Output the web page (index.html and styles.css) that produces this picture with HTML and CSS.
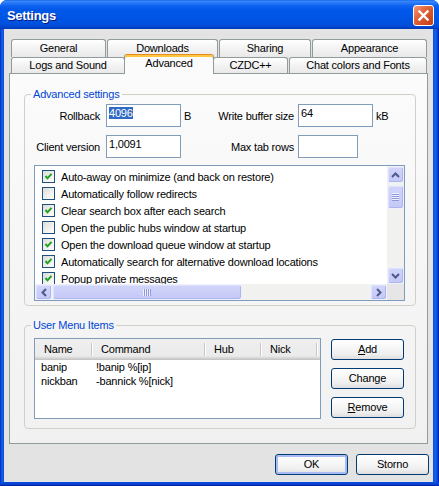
FILE: index.html
```html
<!DOCTYPE html>
<html>
<head>
<meta charset="utf-8">
<title>Settings</title>
<link rel="stylesheet" href="styles.css">
</head>
<body>
<div class="window">
  <div class="titlebar">
    <span class="title">Settings</span>
    <span class="close"><svg width="19" height="19" viewBox="0 0 19 19"><path d="M5.5 5.5 L13.5 13.5 M13.5 5.5 L5.5 13.5" stroke="#fff" stroke-width="2.4" stroke-linecap="square"/></svg></span>
  </div>
  <div class="client">
    <div class="tabs">
      <div class="tabrow back">
        <div class="tab t-general">General</div>
        <div class="tab t-downloads">Downloads</div>
        <div class="tab t-sharing">Sharing</div>
        <div class="tab t-appearance">Appearance</div>
      </div>
      <div class="tabrow front">
        <div class="tab t-logs">Logs and Sound</div>
        <div class="tab t-advanced sel-tab">Advanced</div>
        <div class="tab t-czdc">CZDC++</div>
        <div class="tab t-chat">Chat colors and Fonts</div>
      </div>
    </div>
    <div class="panel">
      <fieldset class="group adv">
        <legend>Advanced settings</legend>
        <div class="frow">
          <span class="lbl l1">Rollback</span>
          <span class="edit w75"><span class="hl">4096</span></span>
          <span class="unit">B</span>
          <span class="lbl l2">Write buffer size</span>
          <span class="edit w75">64</span>
          <span class="unit">kB</span>
        </div>
        <div class="frow">
          <span class="lbl l1">Client version</span>
          <span class="edit w75">1,0091</span>
          <span class="unit"></span>
          <span class="lbl l2">Max tab rows</span>
          <span class="edit w60"></span>
        </div>
        <div class="listbox">
          <div class="lb-items">
            <div class="item"><span class="cb"><svg width="11" height="11" viewBox="0 0 11 11"><path d="M2.5 5 L4.5 7.3 L8.5 2.8" fill="none" stroke="#21a121" stroke-width="2"/></svg></span><span>Auto-away on minimize (and back on restore)</span></div>
            <div class="item"><span class="cb"></span><span>Automatically follow redirects</span></div>
            <div class="item"><span class="cb"><svg width="11" height="11" viewBox="0 0 11 11"><path d="M2.5 5 L4.5 7.3 L8.5 2.8" fill="none" stroke="#21a121" stroke-width="2"/></svg></span><span>Clear search box after each search</span></div>
            <div class="item"><span class="cb"></span><span>Open the public hubs window at startup</span></div>
            <div class="item"><span class="cb"><svg width="11" height="11" viewBox="0 0 11 11"><path d="M2.5 5 L4.5 7.3 L8.5 2.8" fill="none" stroke="#21a121" stroke-width="2"/></svg></span><span>Open the download queue window at startup</span></div>
            <div class="item"><span class="cb"><svg width="11" height="11" viewBox="0 0 11 11"><path d="M2.5 5 L4.5 7.3 L8.5 2.8" fill="none" stroke="#21a121" stroke-width="2"/></svg></span><span>Automatically search for alternative download locations</span></div>
            <div class="item"><span class="cb"><svg width="11" height="11" viewBox="0 0 11 11"><path d="M2.5 5 L4.5 7.3 L8.5 2.8" fill="none" stroke="#21a121" stroke-width="2"/></svg></span><span>Popup private messages</span></div>
          </div>
          <div class="vbar">
            <span class="sb"><svg width="9" height="6" viewBox="0 0 9 6"><path d="M1 5 L4.5 1.5 L8 5" fill="none" stroke="#4d5a8e" stroke-width="2"/></svg></span>
            <span class="vthumb"><span class="grip-h"></span></span>
            <span class="sb down"><svg width="9" height="6" viewBox="0 0 9 6"><path d="M1 1 L4.5 4.5 L8 1" fill="none" stroke="#4d5a8e" stroke-width="2"/></svg></span>
          </div>
          <div class="hbar">
            <span class="sb"><svg width="6" height="9" viewBox="0 0 6 9"><path d="M5 1 L1.5 4.5 L5 8" fill="none" stroke="#4d5a8e" stroke-width="2"/></svg></span>
            <span class="hthumb"><span class="grip-v"></span></span>
            <span class="sb right"><svg width="6" height="9" viewBox="0 0 6 9"><path d="M1 1 L4.5 4.5 L1 8" fill="none" stroke="#4d5a8e" stroke-width="2"/></svg></span>
          </div>
          <div class="corner"></div>
        </div>
      </fieldset>
      <fieldset class="group umi">
        <legend>User Menu Items</legend>
        <div class="umi-body">
          <div class="lv">
            <div class="lv-head">
              <span class="hc c1">Name</span>
              <span class="hc c2">Command</span>
              <span class="hc c3">Hub</span>
              <span class="hc c4">Nick</span>
            </div>
            <div class="lv-row"><span class="rc c1">banip</span><span class="rc c2">!banip %[ip]</span></div>
            <div class="lv-row"><span class="rc c1">nickban</span><span class="rc c2">-bannick %[nick]</span></div>
          </div>
          <div class="btncol">
            <button class="btn"><u>A</u>dd</button>
            <button class="btn">Chan<u>g</u>e</button>
            <button class="btn"><u>R</u>emove</button>
          </div>
        </div>
      </fieldset>
    </div>
    <div class="footer">
      <button class="btn def">OK</button>
      <button class="btn">Storno</button>
    </div>
  </div>
</div>
</body>
</html>
```

FILE: styles.css
```css
* { box-sizing: border-box; }
html, body { margin: 0; padding: 0; }
body {
  width: 439px; height: 486px; overflow: hidden; background: #fff;
  font-family: "Liberation Sans", Arial, sans-serif; font-size: 11px;
  letter-spacing: -0.2px; color: #000;
}
.window {
  width: 439px; height: 486px; display: flex; flex-direction: column;
  border-radius: 7px 7px 0 0; overflow: hidden;
  background:
    linear-gradient(to top, #00138c 0, #0838c8 1px, #0a4ad8 3px, rgba(10,74,216,0) 4px),
    linear-gradient(to right, #0019a8 0, #0a4fdc 1px, #1463ec 2px, #0a4ad8 4px, #0a4ad8 433px, #1463ec 435px, #0a4fdc 437px, #0019a8 439px);
}
.titlebar {
  height: 29px; flex: none; display: flex; justify-content: space-between; align-items: flex-start;
  padding: 0 5px 0 7px;
  background: linear-gradient(#0a5ee8 0, #3a8bf9 1px, #2878f7 3px, #0c62ef 6px, #0058ea 10px, #0055e5 18px, #0050dd 24px, #0046cf 27px, #0037b0 29px);
}
.title {
  margin-top: 8px; color: #fff; font-weight: bold; font-size: 13px; line-height: 16px;
  letter-spacing: -0.3px; text-shadow: 1px 1px 0 #0a1a80;
}
.close {
  margin-top: 5px; width: 21px; height: 21px; border: 1px solid #fff; border-radius: 3px;
  background: linear-gradient(135deg, #f39a80 0, #e2693f 35%, #d14e24 70%, #c43e17 100%);
  display: flex; align-items: center; justify-content: center;
}
.close svg { display: block; }
.client {
  flex: 1; min-height: 0; margin: 0 6px 4px 4px; background: #e3e3e3;
  display: flex; flex-direction: column;
}
.tabs { flex: none; margin: 10px 0 0 7px; }
.tabrow { display: flex; }
.tabrow.back { height: 18px; }
.tabrow.front { height: 16px; position: relative; z-index: 1; }
.tab {
  flex: none; height: 100%; border: 1px solid #919b9c; border-bottom: 0; border-radius: 3px 3px 0 0;
  background: linear-gradient(#ffffff, #f3f3f3 50%, #e9e9e9);
  text-align: center; line-height: 16px; white-space: nowrap;
}
.front .tab { line-height: 15px; }
.tab.sel-tab {
  height: 20px; margin-top: -3px; background: #fbfbfb;
  border-top: 1px solid #e68b2c; box-shadow: inset 0 2px 0 #ffc73c;
  padding-top: 1px; position: relative; z-index: 2;
}
.t-general { width: 95px; }
.t-downloads { width: 111px; margin-left: 1px; }
.t-sharing { width: 92px; margin-left: 1px; }
.t-appearance { width: 115px; margin-left: 1px; }
.t-logs { width: 114px; }
.t-advanced { width: 90px; margin-left: -1px; }
.t-czdc { width: 75px; margin-left: -1px; }
.t-chat { width: 138px; margin-left: 1px; }
.panel {
  flex: none; margin-left: 5px; width: 419px; height: 371px;
  border: 1px solid #919b9c; background: linear-gradient(#fbfbfb, #f1f1f1);
  padding: 0 11px 0 14px;
}
.group {
  margin: 14px 0 0; padding: 3px 10px 4px 9px; border: 1px solid #d0d0c8;
  border-radius: 4px; min-width: 0;
}
.group legend { padding: 0 2px; margin-left: -3px; color: #0046d5; line-height: 13px; }
.umi { margin-top: 13px; padding: 6px 11px 9px 9px; }
.frow { display: flex; align-items: center; height: 23px; }
.frow + .frow { margin-top: 8px; }
.lbl { flex: none; text-align: right; white-space: nowrap; }
.l1 { width: 66px; margin-right: 6px; }
.l2 { width: 90px; margin-right: 4px; }
.edit {
  flex: none; height: 23px; border: 1px solid #7f9db9; background: #fff;
  padding: 2px 0 0 2px; line-height: 13px; white-space: nowrap;
}
.w75 { width: 75px; }
.w60 { width: 60px; }
.unit { flex: none; width: 20px; margin-left: 3px; }
.hl { background: #316ac5; color: #fff; }
.listbox {
  margin-top: 7px; height: 136px; border: 1px solid #7f9db9; background: #fff;
  display: grid; grid-template-columns: 1fr 17px; grid-template-rows: 1fr 16px;
}
.lb-items { overflow: hidden; padding-top: 2px; min-height: 0; min-width: 0; }
.item { display: flex; align-items: center; height: 17px; padding-left: 7px; white-space: nowrap; }
.cb {
  flex: none; width: 13px; height: 13px; border: 1px solid #1c5180;
  background: linear-gradient(135deg, #dcdcd7, #ffffff); margin-right: 6px; display: flex;
}
.cb svg { display: block; }
.vbar { background: #f1f1ef; display: flex; flex-direction: column; min-height: 0; }
.hbar { background: #f1f1ef; display: flex; min-width: 0; }
.sb, .vthumb, .hthumb {
  flex: none; border: 1px solid #eef0fd; border-radius: 3px;
  background: linear-gradient(#d2d5fa, #c4c8f6);
  box-shadow: inset -1px -1px 0 #aeb4ec, inset 1px 1px 0 #e0e2fc;
  display: flex; align-items: center; justify-content: center;
}
.sb { width: 17px; height: 17px; }
.sb svg { display: block; }
.hbar .sb { height: 16px; }
.vbar .down { margin-top: auto; }
.hbar .right { margin-left: auto; }
.vthumb { width: 17px; height: 24px; margin-top: 2px; }
.hthumb { width: 190px; height: 16px; }
.grip-h { width: 7px; height: 8px; background: repeating-linear-gradient(#f0f1ff 0 1px, #8f98d8 1px 2px); }
.grip-v { width: 8px; height: 7px; background: repeating-linear-gradient(to right, #f0f1ff 0 1px, #8f98d8 1px 2px); }
.corner { background: #e6e6e6; }
.umi-body { display: flex; align-items: flex-start; }
.lv { flex: none; width: 287px; height: 81px; border: 1px solid #7f9db9; background: #fff; overflow: hidden; }
.lv-head {
  display: flex; height: 21px;
  background: linear-gradient(#efefef 0, #ebebeb 17px, #e1e1e1 18px, #d6d6d6 19px, #cbcbcb 20px, #c0c0c0 21px);
}
.hc { position: relative; flex: none; line-height: 21px; padding-left: 9px; white-space: nowrap; }
.hc::after {
  content: ""; position: absolute; right: 0; top: 4px; bottom: 4px; width: 1px;
  background: #c5c5c5; box-shadow: 1px 0 0 #fff;
}
.c1 { width: 57px; }
.c2 { width: 113px; }
.c3 { width: 56px; }
.c4 { width: 56px; }
.lv-row { display: flex; height: 14px; line-height: 14px; }
.rc { flex: none; white-space: nowrap; }
.lv-row .c1 { padding-left: 6px; }
.lv-row .c2 { padding-left: 4px; }
.btncol { display: flex; flex-direction: column; gap: 8px; margin-left: 10px; padding-top: 1px; }
.btn {
  width: 73px; height: 21px; border: 1px solid #003c74; border-radius: 3px;
  background: linear-gradient(#ffffff, #f7f7f7 40%, #efefef 75%, #dedede);
  font-family: inherit; font-size: 11px; font-weight: 400; letter-spacing: inherit;
  color: #000; line-height: 19px; padding: 0; text-align: center;
}
.btn.def { box-shadow: inset 0 0 0 2px #a9bbf2; }
.footer { flex: none; display: flex; justify-content: flex-end; gap: 8px; margin-top: 10px; padding-right: 4px; }
```
